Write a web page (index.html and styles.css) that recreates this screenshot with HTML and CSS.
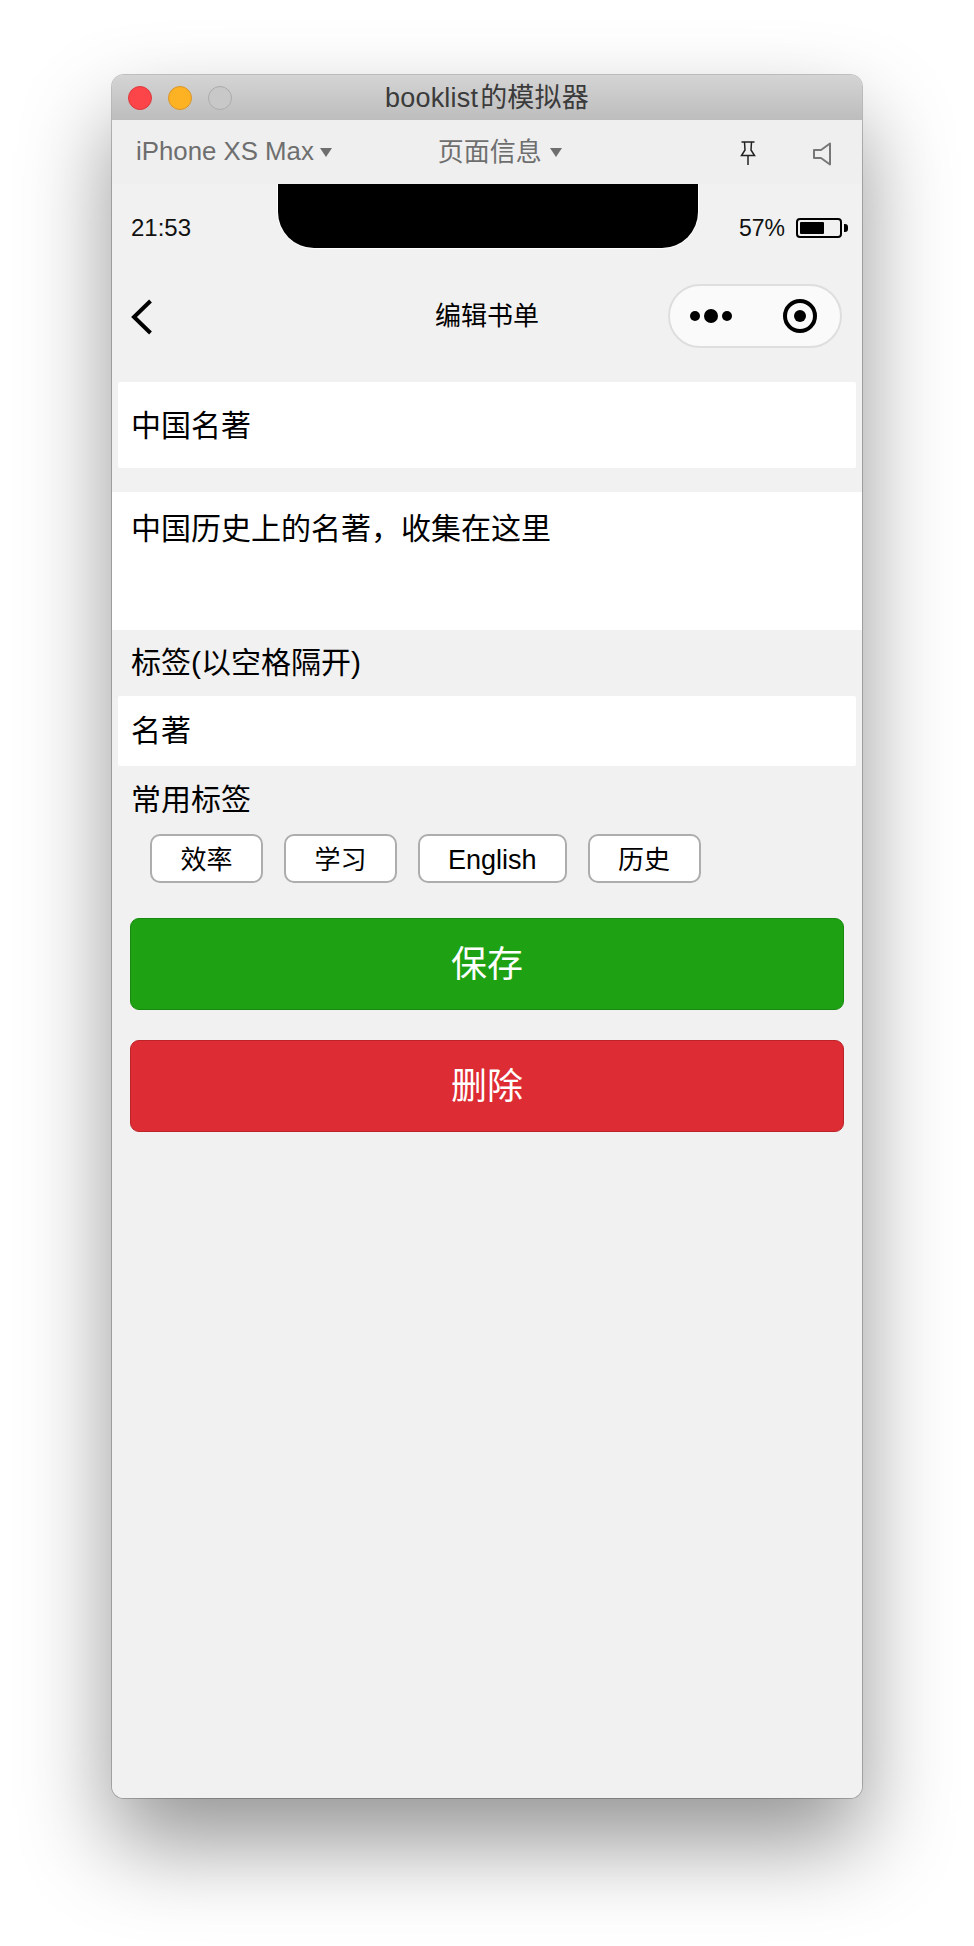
FILE: index.html
```html
<!DOCTYPE html>
<html lang="zh">
<head>
<meta charset="utf-8">
<title>booklist的模拟器</title>
<link rel="stylesheet" href="styles.css">
</head>
<body>
<div class="window">
  <header class="titlebar">
    <div class="lights">
      <span class="light light-red"></span>
      <span class="light light-yellow"></span>
      <span class="light light-grey"></span>
    </div>
    <div class="window-title">booklist<span class="title-cjk">的模拟器</span></div>
  </header>
  <div class="toolbar">
    <div class="tool-device">iPhone XS Max<span class="caret"></span></div>
    <div class="tool-page"><span class="tool-page-text">页面信息</span><span class="caret caret-page"></span></div>
    <svg class="icon-pin" viewBox="0 0 16 24" width="16" height="24"><path d="M1.5 1H14.5M4.5 1L5 9L1.5 14.5H14.5L11 9L11.5 1M8 14.5V24" fill="none" stroke="#222" stroke-width="1.5"/></svg>
    <svg class="icon-speaker" viewBox="0 0 18 24" width="18" height="24"><path d="M17 1.5L8 8H1V16H8L17 22.5Z" fill="none" stroke="#777" stroke-width="2" stroke-linejoin="round"/></svg>
  </div>
  <main class="phone">
    <div class="statusbar">
      <span class="time">21:53</span>
      <div class="notch"></div>
      <div class="battery-group">
        <span class="percent">57%</span>
        <span class="battery"><span class="battery-fill"></span></span>
        <span class="battery-tip"></span>
      </div>
    </div>
    <nav class="navbar">
      <svg class="back" viewBox="0 0 22 36" width="22" height="36"><path d="M19.500 2L3 18L19.500 34" fill="none" stroke="#000" stroke-width="4"/></svg>
      <div class="nav-title">编辑书单</div>
      <div class="capsule">
        <svg viewBox="0 0 44 16" width="44" height="16"><circle cx="6" cy="8" r="5"/><circle cx="22" cy="8" r="7"/><circle cx="38" cy="8" r="5"/></svg>
        <svg viewBox="0 0 36 36" width="36" height="36"><circle cx="18" cy="18" r="15" fill="none" stroke="#000" stroke-width="4"/><circle cx="18" cy="18" r="6"/></svg>
      </div>
    </nav>
    <div class="field field-name">中国名著</div>
    <div class="field field-desc">中国历史上的名著，收集在这里</div>
    <div class="label label-tags">标签(以空格隔开)</div>
    <div class="field field-tags">名著</div>
    <div class="label label-common">常用标签</div>
    <div class="tags">
      <span class="tag">效率</span>
      <span class="tag">学习</span>
      <span class="tag tag-en">English</span>
      <span class="tag">历史</span>
    </div>
    <button class="btn btn-save">保存</button>
    <button class="btn btn-delete">删除</button>
  </main>
</div>
</body>
</html>
```
FILE: styles.css
```css
* { box-sizing: border-box; }
html, body { margin: 0; height: 1946px; overflow: hidden; background: #fff; }
body {
  padding: 75px 112px 0;
  font-family: "Liberation Sans", "Noto Sans CJK SC", sans-serif;
  color: #000;
}
.window {
  width: 750px;
  height: 1723px;
  border-radius: 12px;
  background: #f1f1f1;
  box-shadow: 0 0 0 1px rgba(0,0,0,.22), 0 45px 90px rgba(0,0,0,.42);
  overflow: hidden;
  display: flex;
  flex-direction: column;
}
.titlebar {
  height: 45px;
  flex: none;
  position: relative;
  display: flex;
  align-items: center;
  justify-content: center;
  background: linear-gradient(#d4d4d4, #bdbdbd);
}
.lights {
  position: absolute;
  left: 16px;
  top: 11px;
  display: flex;
  gap: 16px;
}
.light { width: 24px; height: 24px; border-radius: 50%; border: 1px solid; }
.light-red { background: #fc4549; border-color: #dc3a3e; }
.light-yellow { background: #fdb224; border-color: #d9952a; }
.light-grey { background: #c8c8c8; border-color: #ababab; }
.window-title { font-size: 27px; color: #3b3b3b; line-height: 45px; margin-top: 2px; letter-spacing: .2px; }
.title-cjk { margin-left: 2px; }
.toolbar {
  height: 64px;
  flex: none;
  position: relative;
  background: #efefef;
  display: flex;
  align-items: center;
  font-size: 25.800px;
  color: #6e6e6e;
  padding-bottom: 2px;
}
.tool-device { margin-left: 24px; display: flex; align-items: center; }
.tool-page { margin-left: 106px; display: flex; align-items: center; }
.tool-page-text { margin-top: -3px; font-size: 26px; }
.caret {
  width: 0;
  height: 0;
  margin-left: 6px;
  margin-top: 3px;
  border-left: 6px solid transparent;
  border-right: 6px solid transparent;
  border-top: 9px solid #6e6e6e;
}
.caret-page { margin-left: 8px; }
.icon-pin { margin-left: 178px; margin-top: 4px; }
.icon-speaker { margin-left: 57px; margin-top: 6px; }
.phone {
  flex: 1;
  display: flex;
  flex-direction: column;
  background: #f1f1f1;
}
.statusbar {
  height: 88px;
  flex: none;
  position: relative;
  display: flex;
  justify-content: space-between;
  align-items: center;
  padding: 0 14px 0 19px;
  font-size: 23.500px;
  color: #111;
}
.time { font-size: 24px; }
.notch {
  position: absolute;
  left: 166px;
  top: 0;
  width: 420px;
  height: 64px;
  background: #000;
  border-radius: 0 0 36px 36px;
  box-shadow: 0 1px 0 #fff, 1px 0 0 #fff, -1px 0 0 #fff;
}
.battery-group { display: flex; align-items: center; }
.percent { margin-right: 11px; font-size: 23px; }
.battery {
  width: 46px;
  height: 20px;
  border: 2px solid #000;
  border-radius: 4px;
  padding: 2px;
  display: flex;
}
.battery-fill { width: 24px; background: #000; border-radius: 1px; }
.battery-tip {
  width: 4px;
  height: 8px;
  margin-left: 2px;
  background: #000;
  border-radius: 0 3px 3px 0;
}
.navbar {
  height: 88px;
  flex: none;
  position: relative;
  display: flex;
  align-items: center;
  justify-content: center;
  margin-bottom: 22px;
}
.back { position: absolute; left: 19px; top: 27px; }
.nav-title { font-size: 26px; margin-top: -5px; }
.capsule {
  position: absolute;
  right: 20px;
  top: 12px;
  width: 174px;
  height: 64px;
  border-radius: 32px;
  border: 2px solid #dedede;
  background: #fafafa;
  display: flex;
  align-items: center;
  gap: 49px;
  padding-left: 19px;
}
.capsule svg { flex: none; }
.field { background: #fff; font-size: 30px; padding-left: 13px; }
.field-name {
  height: 86px;
  margin: 0 6px 24px;
  line-height: 87px;
  border-radius: 2px;
}
.field-desc {
  height: 138px;
  padding-left: 19px;
  padding-top: 16px;
  line-height: 42px;
}
.field-tags {
  height: 70px;
  margin: 0 6px;
  line-height: 70px;
  border-radius: 2px;
}
.label { font-size: 30px; padding-left: 19px; }
.label-tags { height: 66px; line-height: 66px; }
.label-common { height: 68px; line-height: 67px; }
.tags { display: flex; gap: 21px; padding-left: 38px; }
.tag {
  height: 49px;
  padding: 0 28.500px;
  border: 2px solid #adadad;
  border-radius: 10px;
  background: #fff;
  font-size: 26px;
  line-height: 49px;
}
.tag-en { padding: 0 28px; font-size: 27px; }
.btn {
  display: block;
  width: 714px;
  height: 92px;
  margin: 0 0 0 18px;
  border-radius: 9px;
  border: 1px solid;
  color: #fff;
  font-family: inherit;
  font-size: 36px;
  padding: 0 0 7px;
}
.btn-save { margin-top: 35px; background: #1ea214; border-color: #188a10; }
.btn-delete { margin-top: 30px; background: #dd2c33; border-color: #bd242a; }
```
